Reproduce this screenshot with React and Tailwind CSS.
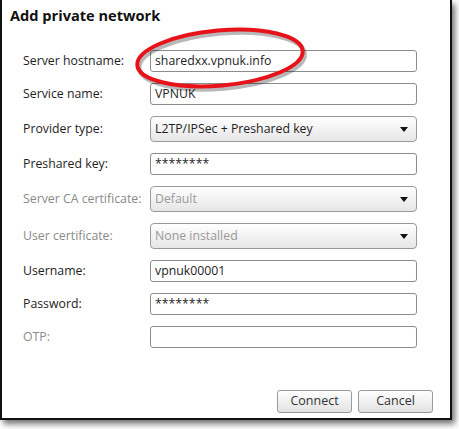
import { useState } from 'react'

function Field({ label, value, disabled }) {
  return (
    <>
      <label className={disabled ? 'text-[#8a8a8a]' : 'text-[#1e1e1e]'}>{label}</label>
      <div className="flex h-[22px] items-center rounded-[3px] border border-[#8c8c8c] bg-white px-[4px] text-[#1e1e1e]">
        {value}
      </div>
    </>
  )
}

function Select({ label, value, disabled }) {
  return (
    <>
      <label className={disabled ? 'text-[#8a8a8a]' : 'text-[#1e1e1e]'}>{label}</label>
      <div className="flex h-[26px] items-center justify-between rounded-[4px] border border-[#9a9a9a] bg-gradient-to-b from-white to-[#e6e6e6] pl-[4px] pr-[8px]">
        <span className={disabled ? 'text-[#9a9a9a]' : 'text-[#1e1e1e]'}>{value}</span>
        <svg width="8" height="5" viewBox="0 0 8 5">
          <path d="M0 0 H8 L4 5 Z" fill="#111" />
        </svg>
      </div>
    </>
  )
}

function Button({ children }) {
  return (
    <button className="h-[23px] w-[75px] rounded-[3px] border border-[#9a9a9a] bg-gradient-to-b from-white to-[#e2e2e2] text-[12.5px] text-[#333]">
      {children}
    </button>
  )
}

export default function App() {
  const [host] = useState('sharedxx.vpnuk.info')

  return (
    <div className="relative h-[429px] w-[459px] overflow-hidden bg-white" style={{ fontFamily: '"Open Sans", "DejaVu Sans", sans-serif' }}>
      <div className="flex h-[420px] w-[452px] flex-col border-b-2 border-l-2 border-r-2 border-[#111] bg-white shadow-[3px_4px_6px_rgba(0,0,0,0.55)]">
        <h1 className="pl-[8px] pt-[3px] text-[14.6px] font-bold leading-[24px] text-[#111]">Add private network</h1>

        {/* ── Form ─────────────────────────────────────────────── */}
        <div className="mt-[23px] grid grid-cols-[127px_267px] items-center gap-y-[11px] pl-[21px] text-[12.3px]">
          <Field label="Server hostname:" value={host} />
          <Field label="Service name:" value="VPNUK" />
          <Select label="Provider type:" value="L2TP/IPSec + Preshared key" />
          <Field label="Preshared key:" value="********" />
          <Select label="Server CA certificate:" value="Default" disabled />
          <Select label="User certificate:" value="None installed" disabled />
          <Field label="Username:" value="vpnuk00001" />
          <Field label="Password:" value="********" />
          <Field label="OTP:" value="" disabled />
        </div>

        <div className="mt-auto flex justify-end gap-[6px] pb-[5px] pr-[17px]">
          <Button>Connect</Button>
          <Button>Cancel</Button>
        </div>
      </div>

      {/* red annotation ring */}
      <svg className="absolute left-[128px] top-[20px]" width="190" height="76" viewBox="0 0 190 76">
        <ellipse cx="92" cy="38" rx="83" ry="27.5" fill="none" stroke="rgba(0,0,0,0.28)" strokeWidth="4.5" transform="translate(2 3) rotate(-5 92 38)" />
        <ellipse cx="92" cy="38" rx="83" ry="27.5" fill="none" stroke="#e8121a" strokeWidth="4" transform="rotate(-5 92 38)" />
      </svg>
    </div>
  )
}
